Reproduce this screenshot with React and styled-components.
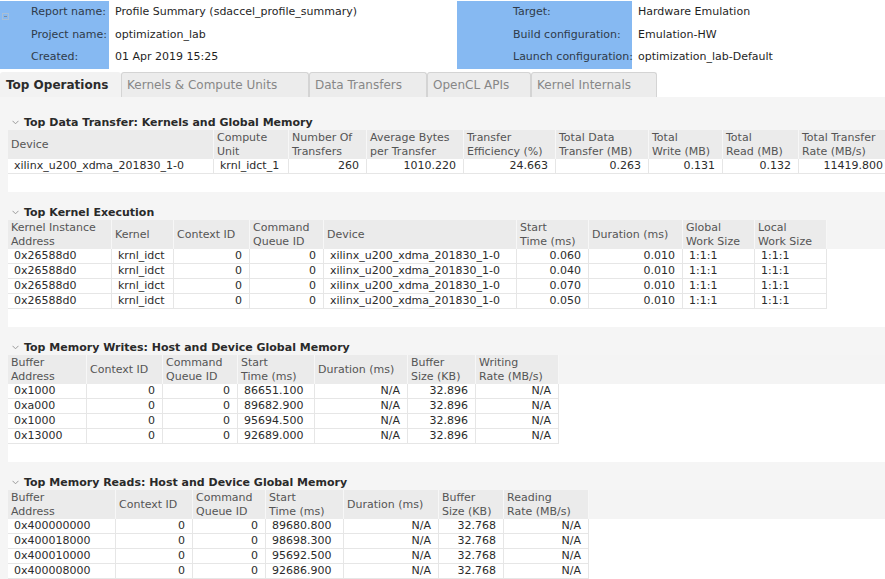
import React from "react";
import styled, { createGlobalStyle, css } from "styled-components";

const Global = createGlobalStyle`
  html, body { margin: 0; padding: 0; background: #ffffff; }
  body {
    font-family: "DejaVu Sans", "Liberation Sans", sans-serif;
    font-size: 11px;
    color: #2e2e2e;
  }
  * { box-sizing: border-box; }
`;

const Page = styled.div`
  width: 885px;
  height: 579px;
  overflow: hidden;
  display: flex;
  flex-direction: column;
  background: #ffffff;
`;

/* ---------- report header ---------- */
const Header = styled.div`
  display: flex;
  padding-top: 1px;
  height: 69px;
`;

const LabelPanel = styled.div`
  display: flex;
  align-items: flex-start;
  width: ${(p) => p.$width}px;
  height: 67.5px;
  background: #86b9f2;
  padding-left: ${(p) => p.$pad}px;
`;

const CollapseBox = styled.div`
  width: 7px;
  height: 7px;
  margin: 12px 22px 0 2px;
  border: 1px solid #a9bfd6;
  display: flex;
  align-items: center;
  justify-content: center;
  &::after {
    content: "";
    width: 3px;
    height: 1px;
    background: #7d8c9c;
  }
`;

const FieldList = styled.div`
  display: flex;
  flex-direction: column;
  line-height: 22.5px;
  color: ${(p) => (p.$label ? "#2f3b4a" : "#1f1f1f")};
  padding-left: ${(p) => p.$pad || 0}px;
  width: ${(p) => (p.$width ? `${p.$width}px` : "auto")};
  flex: ${(p) => (p.$width ? "none" : 1)};
  white-space: nowrap;
`;

/* ---------- tabs ---------- */
const TabStrip = styled.div`
  display: flex;
  margin-top: 3px;
  height: 25px;
  background: #ffffff;
`;

const Tab = styled.div`
  width: ${(p) => p.$width}px;
  height: 25px;
  padding-left: 5px;
  line-height: 24px;
  font-size: 12px;
  white-space: nowrap;
  border: 1px solid #d4d4d4;
  border-bottom: none;
  border-radius: 3px 3px 0 0;
  background: #ececec;
  color: #878787;
  ${(p) =>
    p.$active &&
    css`
      background: #f2f2f2;
      color: #2c2c2c;
      font-weight: bold;
      border-color: #f2f2f2;
    `}
`;

/* ---------- content ---------- */
const Content = styled.div`
  flex: 1;
  background: #f5f5f5;
  padding: 17px 0 0 8px;
  display: flex;
  flex-direction: column;
  gap: 12px;
  overflow: hidden;
`;

const Section = styled.section`
  display: flex;
  flex-direction: column;
`;

const SectionTitle = styled.div`
  height: 16px;
  display: flex;
  align-items: center;
  gap: 5px;
  padding-left: 4px;
  font-weight: bold;
  color: #2a2a2a;
  white-space: nowrap;
`;

const TableBox = styled.div`
  display: grid;
  grid-template-columns: ${(p) => p.$cols} minmax(0, 1fr);
  background: #ffffff;
  overflow: hidden;
`;

const HeadCell = styled.div`
  height: 29px;
  display: flex;
  align-items: center;
  padding: 0 2px 0 3px;
  background: #ebebeb;
  color: #555555;
  line-height: 14px;
  white-space: pre;
  overflow: hidden;
  border-right: 1px solid #f7f7f7;
`;

const HeadFill = styled.div`
  height: 29px;
  background: #f4f4f4;
`;

const Cell = styled.div`
  height: 15px;
  line-height: 14px;
  padding: 0 7px 0 6px;
  text-align: ${(p) => p.$align};
  white-space: nowrap;
  overflow: hidden;
  color: #2b2b2b;
  border-right: 1px solid #e6e6e6;
  border-bottom: 1px solid #e6e6e6;
`;

const RowFill = styled.div`
  height: 15px;
`;

const TableFiller = styled.div`
  grid-column: 1 / -1;
  height: 18px;
  background: #ffffff;
`;

const Chevron = () => (
  <svg width="7" height="5" viewBox="0 0 7 5">
    <path d="M0.5 0.8 L3.5 3.8 L6.5 0.8" fill="none" stroke="#9a9a9a" strokeWidth="1" />
  </svg>
);

function DataTable({ title, columns, rows }) {
  const cols = columns.map((c) => `${c.w}px`).join(" ");
  return (
    <Section>
      <SectionTitle>
        <Chevron />
        <span>{title}</span>
      </SectionTitle>
      <TableBox $cols={cols}>
        {columns.map((c, i) => (
          <HeadCell key={`h${i}`}>{c.label}</HeadCell>
        ))}
        <HeadFill />
        {rows.map((r, ri) => (
          <React.Fragment key={`r${ri}`}>
            {r.map((v, ci) => (
              <Cell key={ci} $align={columns[ci].a}>
                {v}
              </Cell>
            ))}
            <RowFill />
          </React.Fragment>
        ))}
        <TableFiller />
      </TableBox>
    </Section>
  );
}

const L = "left";
const R = "right";

const transferCols = [
  { label: "Device", w: 206, a: L },
  { label: "Compute\nUnit", w: 75, a: L },
  { label: "Number Of\nTransfers", w: 78, a: R },
  { label: "Average Bytes\nper Transfer", w: 97, a: R },
  { label: "Transfer\nEfficiency (%)", w: 92, a: R },
  { label: "Total Data\nTransfer (MB)", w: 93, a: R },
  { label: "Total\nWrite (MB)", w: 74, a: R },
  { label: "Total\nRead (MB)", w: 76, a: R },
  { label: "Total Transfer\nRate (MB/s)", w: 92, a: R },
];
const transferRows = [
  ["xilinx_u200_xdma_201830_1-0", "krnl_idct_1", "260", "1010.220", "24.663", "0.263", "0.131", "0.132", "11419.800"],
];

const kernelCols = [
  { label: "Kernel Instance\nAddress", w: 104, a: L },
  { label: "Kernel", w: 62, a: L },
  { label: "Context ID", w: 76, a: R },
  { label: "Command\nQueue ID", w: 74, a: R },
  { label: "Device", w: 193, a: L },
  { label: "Start\nTime (ms)", w: 72, a: R },
  { label: "Duration (ms)", w: 94, a: R },
  { label: "Global\nWork Size", w: 72, a: L },
  { label: "Local\nWork Size", w: 72, a: L },
];
const kernelRows = ["0.060", "0.040", "0.070", "0.050"].map((t) => [
  "0x26588d0", "krnl_idct", "0", "0", "xilinx_u200_xdma_201830_1-0", t, "0.010", "1:1:1", "1:1:1",
]);

const writeCols = [
  { label: "Buffer\nAddress", w: 79, a: L },
  { label: "Context ID", w: 76, a: R },
  { label: "Command\nQueue ID", w: 75, a: R },
  { label: "Start\nTime (ms)", w: 77, a: L },
  { label: "Duration (ms)", w: 93, a: R },
  { label: "Buffer\nSize (KB)", w: 68, a: R },
  { label: "Writing\nRate (MB/s)", w: 83, a: R },
];
const writeRows = [
  ["0x1000", "86651.100"],
  ["0xa000", "89682.900"],
  ["0x1000", "95694.500"],
  ["0x13000", "92689.000"],
].map(([a, t]) => [a, "0", "0", t, "N/A", "32.896", "N/A"]);

const readCols = [
  { label: "Buffer\nAddress", w: 108, a: L },
  { label: "Context ID", w: 77, a: R },
  { label: "Command\nQueue ID", w: 73, a: R },
  { label: "Start\nTime (ms)", w: 78, a: L },
  { label: "Duration (ms)", w: 95, a: R },
  { label: "Buffer\nSize (KB)", w: 65, a: R },
  { label: "Reading\nRate (MB/s)", w: 85, a: R },
];
const readRows = [
  ["0x400000000", "89680.800"],
  ["0x400018000", "98698.300"],
  ["0x400010000", "95692.500"],
  ["0x400008000", "92686.900"],
].map(([a, t]) => [a, "0", "0", t, "N/A", "32.768", "N/A"]);

const tabs = [
  { label: "Top Operations", w: 121, active: true },
  { label: "Kernels & Compute Units", w: 188 },
  { label: "Data Transfers", w: 118 },
  { label: "OpenCL APIs", w: 104 },
  { label: "Kernel Internals", w: 126 },
];

export default function App() {
  return (
    <>
      <Global />
      <Page>
        <Header>
          <LabelPanel $width={109} $pad={0}>
            <CollapseBox />
            <FieldList $label>
              <span>Report name:</span>
              <span>Project name:</span>
              <span>Created:</span>
            </FieldList>
          </LabelPanel>
          <FieldList $width={348} $pad={6}>
            <span>Profile Summary (sdaccel_profile_summary)</span>
            <span>optimization_lab</span>
            <span>01 Apr 2019 15:25</span>
          </FieldList>
          <LabelPanel $width={175} $pad={56}>
            <FieldList $label>
              <span>Target:</span>
              <span>Build configuration:</span>
              <span>Launch configuration:</span>
            </FieldList>
          </LabelPanel>
          <FieldList $pad={6}>
            <span>Hardware Emulation</span>
            <span>Emulation-HW</span>
            <span>optimization_lab-Default</span>
          </FieldList>
        </Header>
        <TabStrip>
          {tabs.map((t) => (
            <Tab key={t.label} $width={t.w} $active={t.active}>
              {t.label}
            </Tab>
          ))}
        </TabStrip>
        <Content>
          <DataTable title="Top Data Transfer: Kernels and Global Memory" columns={transferCols} rows={transferRows} />
          <DataTable title="Top Kernel Execution" columns={kernelCols} rows={kernelRows} />
          <DataTable title="Top Memory Writes: Host and Device Global Memory" columns={writeCols} rows={writeRows} />
          <DataTable title="Top Memory Reads: Host and Device Global Memory" columns={readCols} rows={readRows} />
        </Content>
      </Page>
    </>
  );
}
